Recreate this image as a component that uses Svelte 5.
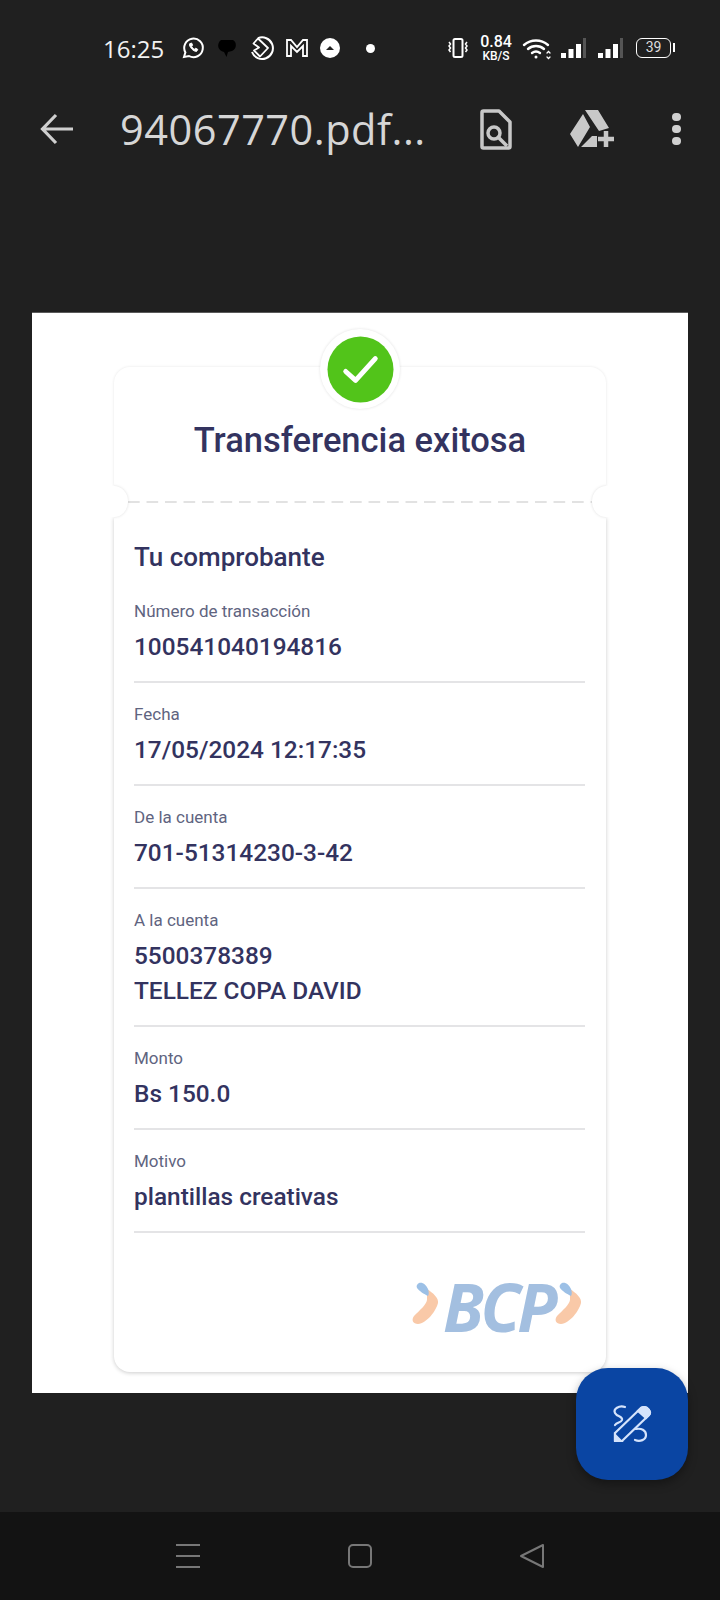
<script>
  const rows = [
    { label: 'Número de transacción', lines: ['100541040194816'] },
    { label: 'Fecha', lines: ['17/05/2024 12:17:35'] },
    { label: 'De la cuenta', lines: ['701-51314230-3-42'] },
    { label: 'A la cuenta', lines: ['5500378389', 'TELLEZ COPA DAVID'] },
    { label: 'Monto', lines: ['Bs 150.0'] },
    { label: 'Motivo', lines: ['plantillas creativas'] }
  ];
</script>

<div class="screen">
  <div class="status">
    <span class="time">16:25</span>
    <div class="notif">
      <svg width="24" height="24" viewBox="0 0 24 24" fill="none" stroke="#fff" stroke-width="2"><path d="M3 21l1.400-4.600A9.300 9.300 0 1 1 8 20z"/><path d="M8.600 7.800c-.8 2.800 3.600 7.800 7 7.600l1.200-2-2.200-1.200-1 1c-1.300-.5-2.600-1.900-3-3l1-1-1-2.200z" fill="#fff" stroke-width="1"/></svg>
      <svg width="24" height="24" viewBox="0 0 24 24"><path d="M6 4h12c4 2 4 9-1 11l-4 1-1.500 5-2.500-5C3 15 1 8 6 4z" fill="#000"/></svg>
      <svg width="26" height="26" viewBox="0 0 26 26" fill="none" stroke="#fff" stroke-width="2"><path d="M9 3.200A10.800 10.800 0 1 1 3 17"/><path d="M9 3.500L19 13 11 21.500 5 15.500 10 12.500 4.500 8.500z" stroke-width="1.800" stroke-linejoin="round"/></svg>
      <svg width="24" height="24" viewBox="0 0 24 24" fill="none" stroke="#fff" stroke-width="1.800"><path d="M2 20V4h4l6 7 6-7h4v16h-4V10l-6 6-6-6v10z"/></svg>
      <svg width="22" height="22" viewBox="0 0 22 22"><circle cx="11" cy="11" r="10" fill="#fff"/><path d="M7 13l4-4 4 4z" fill="#222"/></svg>
      <span class="dot"></span>
    </div>
    <div class="sys">
      <svg width="24" height="24" viewBox="0 0 24 24" fill="none" stroke="#fff" stroke-width="1.500"><rect x="7.500" y="3" width="9" height="18" rx="1.500" stroke-width="2"/><path d="M3 6l1.500 2-1.500 2 1.500 2-1.500 2 1.500 2M21 6l-1.500 2 1.500 2-1.500 2 1.500 2-1.500 2"/></svg>
      <div class="speed"><b>0.84</b><small>KB/S</small></div>
      <svg width="30" height="24" viewBox="0 0 30 24" fill="none" stroke="#fff" stroke-width="2.400" stroke-linecap="round"><path d="M2 9c7-6 17-6 24 0M6 13c4.500-4 11.500-4 16 0M10 17c2.500-2 5.500-2 8 0"/><circle cx="14" cy="21" r="1.500" fill="#fff" stroke="none"/><path d="M25 17l1.500-1.500 1.500 1.500M25 21l1.500 1.500 1.500-1.500" stroke-width="1.300"/></svg>
      {#each [0, 1] as s}
        <svg class="sig" width="26" height="24" viewBox="0 0 26 24" fill="#fff"><rect x="1" y="17" width="5" height="5"/><rect x="8.500" y="13" width="5" height="9"/><rect x="16" y="8" width="5" height="14"/><rect x="23" y="2" width="3" height="20" fill="#555"/></svg>
      {/each}
      <div class="battery"><span>39</span></div>
    </div>
  </div>

  <div class="toolbar">
    <svg class="back" width="36" height="36" viewBox="0 0 36 36" fill="none" stroke="#cfcfcf" stroke-width="3.200"><path d="M34 18H4M17 4L3.500 18 17 32"/></svg>
    <span class="filename">94067770.pdf...</span>
    <svg class="find" width="32" height="41" viewBox="0 0 32 41" fill="none" stroke="#c8c8c8" stroke-width="3.500"><path d="M3.500 2H19l11 11v24.500a1.500 1.500 0 0 1-1.500 1.500h-25A1.500 1.500 0 0 1 2 37.500v-34A1.500 1.500 0 0 1 3.500 2z" stroke-linejoin="round"/><circle cx="14" cy="24" r="6"/><path d="M18.500 28.500L27 37"/></svg>
    <svg class="drive" width="44" height="41" viewBox="0 0 44 41"><path d="M15 1h13l11 18-10 3zM13 5l7 13L8 38 0 25zM22 27h5v11H11z" fill="#c8c8c8"/><path d="M36 22v16M28 30h16" stroke="#c8c8c8" stroke-width="4.500"/></svg>
    <div class="more"><i></i><i></i><i></i></div>
  </div>

  <main class="viewer">
    <div class="page">
      <div class="ticket">
        <div class="check">
          <svg width="67" height="67" viewBox="0 0 68 68"><circle cx="34" cy="34" r="33.500" fill="#52c41a"/><path d="M19 36l10 9 20-22" fill="none" stroke="#fff" stroke-width="5" stroke-linecap="round" stroke-linejoin="round"/></svg>
        </div>
        <section class="top">
          <h1>Transferencia exitosa</h1>
        </section>
        <div class="tear"></div>
        <section class="body">
          <h2>Tu comprobante</h2>
          {#each rows as row}
            <div class="row">
              <p class="label">{row.label}</p>
              {#each row.lines as line}
                <p class="value">{line}</p>
              {/each}
            </div>
          {/each}
          <div class="logo">
            <svg width="172" height="50" viewBox="0 0 172 50">
              {#each [0, 143] as dx}
                <g transform="translate({dx} 0)">
                  <path d="M16 10C22 14 28 19 27 24C25 32 16 44 7 45C2 45 0 41 3 37C9 31 15 26 16 21z" fill="#f9c9a8"/>
                  <path d="M8 4C12 3 15 6 17 10C18 13 18 15 17 17C13 15 8 12 6 9C5 7 6 5 8 4z" fill="#9cc0e6"/>
                </g>
              {/each}
            </svg>
            <span class="bcp">BCP</span>
          </div>
        </section>
      </div>
    </div>
  </main>

  <button class="fab" aria-label="Anotar">
    <svg width="40" height="40" viewBox="0 0 40 40" fill="none" stroke="#d5e3fb" stroke-width="2.200">
      <path d="M3 29L29 4Q32 2 35 4L37 6Q39 9 37 11L10 37H3z" stroke-linejoin="round"/>
      <path d="M29 4Q32 2 35 4L37 6Q39 9 37 11L34 14 26 7z" fill="#d5e3fb"/>
      <path d="M3 37V31L9 37z" fill="#d5e3fb"/>
      <path d="M13 3C7 1 1 5 3 9C5 13 11 12 10 16C9 19 5 18 3 21" stroke-linecap="round"/>
      <path d="M24 25C29 24 34 26 34 31C34 36 28 38 23 36" stroke-linecap="round"/>
    </svg>
  </button>

  <nav class="navbar">
    <div class="menu"><i></i><i></i><i></i></div>
    <div class="home"></div>
    <svg width="26" height="26" viewBox="0 0 26 26" fill="none" stroke="#777" stroke-width="2" stroke-linejoin="round"><path d="M24 2v22L2 13z"/></svg>
  </nav>
</div>

<style>
  :global(body) {
    margin: 0;
    background: #202020;
  }

  .screen {
    position: relative;
    width: 720px;
    height: 1600px;
    display: flex;
    flex-direction: column;
    overflow: hidden;
    background: #202020;
    font-family: Roboto, "Liberation Sans", sans-serif;
  }

  .status {
    height: 96px;
    box-sizing: border-box;
    padding: 0 49px 0 103px;
    display: flex;
    align-items: center;
    color: #fff;
  }

  .time {
    font-family: "Open Sans", sans-serif;
    font-size: 24px;
    width: 78px;
    color: #f2f2f2;
  }

  .notif {
    display: flex;
    align-items: center;
    gap: 10px;
  }

  .dot {
    width: 9px;
    height: 9px;
    margin-left: 15px;
    border-radius: 50%;
    background: #fff;
  }

  .sys {
    margin-left: auto;
    display: flex;
    align-items: center;
    gap: 8px;
  }

  .speed {
    display: flex;
    flex-direction: column;
    align-items: center;
    line-height: 1;
    width: 36px;
  }

  .speed b {
    font-size: 16px;
    font-weight: 500;
  }

  .speed small {
    font-size: 12px;
    font-weight: 500;
  }

  .sig + .sig {
    margin-left: 3px;
  }

  .battery {
    position: relative;
    box-sizing: border-box;
    width: 35px;
    height: 20px;
    margin-left: 5px;
    border: 1.500px solid #fff;
    border-radius: 6px;
    text-align: center;
    font-size: 14px;
    line-height: 17px;
    color: #ddd;
  }

  .battery::after {
    content: '';
    position: absolute;
    right: -5px;
    top: 4px;
    width: 2px;
    height: 9px;
    background: #fff;
  }

  .toolbar {
    height: 90px;
    box-sizing: border-box;
    padding-bottom: 24px;
    display: flex;
    align-items: center;
    color: #d6d6d6;
  }

  .back {
    margin-left: 39px;
  }

  .filename {
    margin-left: 45px;
    width: 360px;
    font-family: "Open Sans", sans-serif;
    font-size: 41.500px;
    letter-spacing: 0.5px;
    white-space: nowrap;
  }

  .drive {
    margin-left: 58px;
  }

  .more {
    margin-left: 58px;
    display: flex;
    flex-direction: column;
    gap: 3.500px;
  }

  .more i {
    width: 8.500px;
    height: 8.500px;
    border-radius: 50%;
    background: #d0d0d0;
  }

  .viewer {
    flex: 1;
    padding: 127px 32px 0;
  }

  .page {
    height: 1080px;
    box-sizing: border-box;
    padding: 54px 82px 0;
    background: #fff;
    box-shadow: 0 -1px 0 #5a5a5a;
  }

  .ticket {
    position: relative;
    height: 1005px;
    display: flex;
    flex-direction: column;
    color: #33335f;
  }

  .check {
    position: absolute;
    left: 206px;
    top: -38px;
    width: 80px;
    height: 80px;
    display: flex;
    align-items: center;
    justify-content: center;
    border-radius: 50%;
    background: #fff;
    box-shadow: 0 0 3px rgba(0, 0, 0, 0.12);
    z-index: 1;
  }

  .top {
    height: 119px;
    border-radius: 16px 16px 0 0;
    box-shadow: 0 0 3px rgba(0, 0, 0, 0.1);
    clip-path: inset(-6px -6px 0 -6px);
    text-align: center;
  }

  h1 {
    margin: 0;
    padding-top: 53px;
    font-size: 34.500px;
    line-height: 40px;
    font-weight: 500;
  }

  .tear {
    position: relative;
    height: 31px;
    margin: 0 14px;
    background: linear-gradient(90deg, #e2e2e2 0 12px, transparent 12px 18.500px) 0 center / 18.500px 2px repeat-x;
  }

  .tear::before,
  .tear::after {
    content: '';
    position: absolute;
    top: 0;
    width: 28px;
    height: 31px;
    border-radius: 50%;
    box-shadow: 0 0 3px rgba(0, 0, 0, 0.13);
    background: #fff;
  }

  .tear::before {
    left: -28px;
    clip-path: inset(-4px -4px -4px 14px);
  }

  .tear::after {
    right: -28px;
    clip-path: inset(-4px 14px -4px -4px);
  }

  .body {
    flex: 1;
    box-sizing: border-box;
    padding: 23px 21px 0 20px;
    border-radius: 0 0 16px 16px;
    box-shadow: 0 1px 4px rgba(0, 0, 0, 0.2);
    clip-path: inset(0 -6px -6px -6px);
  }

  h2 {
    margin: 0 0 27px;
    font-size: 26px;
    line-height: 34px;
    font-weight: 500;
  }

  .row {
    padding-bottom: 17px;
    margin-bottom: 21px;
    border-bottom: 2px solid #e4e4e6;
  }

  .label {
    margin: 0 0 8px;
    font-size: 17px;
    line-height: 20px;
    color: #5f6480;
  }

  .value {
    margin: 0;
    font-size: 24.400px;
    line-height: 35px;
    font-weight: 500;
  }

  .logo {
    position: relative;
    height: 50px;
    width: 172px;
    margin: 46px 2px 0 auto;
  }

  .bcp {
    position: absolute;
    left: 32px;
    top: -11px;
    font-family: "Open Sans", sans-serif;
    font-size: 66px;
    line-height: 76px;
    font-weight: 700;
    font-style: italic;
    letter-spacing: -3.500px;
    color: #a3bfe0;
  }

  .fab {
    position: absolute;
    left: 576px;
    top: 1368px;
    width: 112px;
    height: 112px;
    padding: 0;
    display: flex;
    align-items: center;
    justify-content: center;
    border: none;
    border-radius: 32px;
    background: #0a45a3;
    box-shadow: 0 4px 10px rgba(0, 0, 0, 0.35);
  }

  .navbar {
    height: 88px;
    display: flex;
    align-items: center;
    padding: 0 175px 0 176px;
    justify-content: space-between;
    background: #131313;
  }

  .menu {
    display: flex;
    flex-direction: column;
    gap: 9px;
  }

  .menu i {
    width: 24px;
    height: 2px;
    background: #777;
  }

  .home {
    width: 20px;
    height: 20px;
    border: 2px solid #777;
    border-radius: 5px;
  }
</style>
